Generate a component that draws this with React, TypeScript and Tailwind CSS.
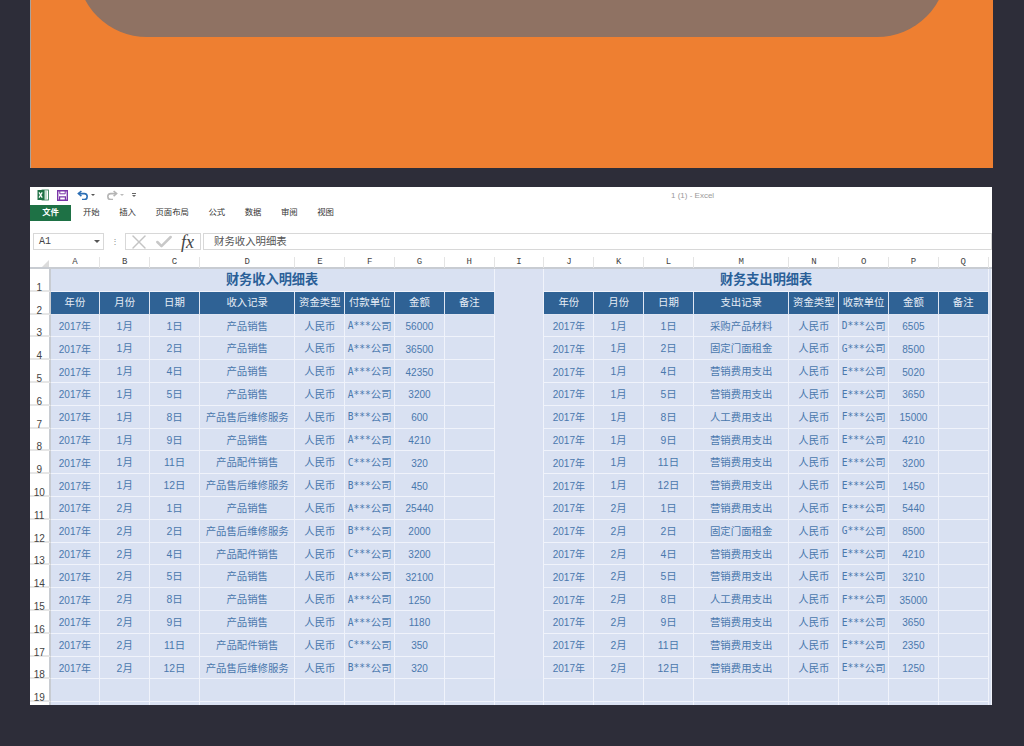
import { Fragment } from "react";
import { Check, X } from "lucide-react";

const letters = ["A", "B", "C", "D", "E", "F", "G", "H", "I", "J", "K", "L", "M", "N", "O", "P", "Q"];

const gridCols =
  "grid grid-cols-[20.5px_repeat(3,49.8px)_95.6px_repeat(8,49.8px)_95.6px_repeat(4,49.8px)_1fr] auto-rows-[22.8px] shrink-0";

const tabs = ["开始", "插入", "页面布局", "公式", "数据", "审阅", "视图"];

const months = ["1月", "2月"];
const days = ["1日", "2日", "4日", "5日", "8日", "9日", "11日", "12日"];

// [record, company, amount]
const income: [string, string, string][] = [
  ["产品销售", "A", "56000"],
  ["产品销售", "A", "36500"],
  ["产品销售", "A", "42350"],
  ["产品销售", "A", "3200"],
  ["产品售后维修服务", "B", "600"],
  ["产品销售", "A", "4210"],
  ["产品配件销售", "C", "320"],
  ["产品售后维修服务", "B", "450"],
  ["产品销售", "A", "25440"],
  ["产品售后维修服务", "B", "2000"],
  ["产品配件销售", "C", "3200"],
  ["产品销售", "A", "32100"],
  ["产品销售", "A", "1250"],
  ["产品销售", "A", "1180"],
  ["产品配件销售", "C", "350"],
  ["产品售后维修服务", "B", "320"],
];

const expense: [string, string, string][] = [
  ["采购产品材料", "D", "6505"],
  ["固定门面租金", "G", "8500"],
  ["营销费用支出", "E", "5020"],
  ["营销费用支出", "E", "3650"],
  ["人工费用支出", "F", "15000"],
  ["营销费用支出", "E", "4210"],
  ["营销费用支出", "E", "3200"],
  ["营销费用支出", "E", "1450"],
  ["营销费用支出", "E", "5440"],
  ["固定门面租金", "G", "8500"],
  ["营销费用支出", "E", "4210"],
  ["营销费用支出", "E", "3210"],
  ["人工费用支出", "F", "35000"],
  ["营销费用支出", "E", "3650"],
  ["营销费用支出", "E", "2350"],
  ["营销费用支出", "E", "1250"],
];

function RowNum({ n }: { n?: number }) {
  return (
    <div className="flex items-end justify-center bg-white border-r-2 border-r-[#c8ccd2] border-b-2 border-b-[#e6e6e6] text-[10px] leading-[5px] text-[#444]">
      {n}
    </div>
  );
}

function Cell({ children, num }: { children?: React.ReactNode; num?: boolean }) {
  return (
    <div
      className={`flex items-center justify-center whitespace-nowrap bg-[#d9e1f2] border-r border-b border-[#f0f3fb] text-[#4a78ad] pt-[2px] ${
        num ? "text-[10px]" : "text-[10.4px]"
      }`}
    >
      {children}
    </div>
  );
}

function Head({ label }: { label: string }) {
  return (
    <div className="flex items-center justify-center bg-[#2f6295] border-r border-b border-[#dfe6f3] text-[10.4px] text-[#e6edf6] pt-[1px]">
      {label}
    </div>
  );
}

function Company({ letter }: { letter: string }) {
  return (
    <Cell>
      <span className="font-['DejaVu_Sans_Mono'] text-[9.6px]">{letter}***</span>
      公司
    </Cell>
  );
}

function Gap() {
  return <div className="bg-[#dae1f2] border-r border-[#f0f3fb]" />;
}

function Title({ label }: { label: string }) {
  return (
    <div className="col-span-8 flex items-center justify-center bg-[#d9e1f2] border-r border-b border-[#f0f3fb] text-[13.2px] font-bold text-[#2a5f98]">
      {label}
    </div>
  );
}

function HeadRow({ labels }: { labels: string[] }) {
  return (
    <>
      {labels.map((l, i) => (
        <Head key={i} label={l} />
      ))}
    </>
  );
}

function Side({ rec, i }: { rec: [string, string, string]; i: number }) {
  return (
    <>
      <Cell num>2017年</Cell>
      <Cell>{months[i < 8 ? 0 : 1]}</Cell>
      <Cell>{days[i % 8]}</Cell>
      <Cell>{rec[0]}</Cell>
      <Cell>人民币</Cell>
      <Company letter={rec[1]} />
      <Cell num>{rec[2]}</Cell>
      <Cell />
    </>
  );
}

function ExcelLogo() {
  return (
    <svg viewBox="0 0 12 12" className="w-3 h-3">
      <rect x="5" y="1" width="6.5" height="10" fill="#fff" stroke="#1e7145" strokeWidth="0.8" />
      <path d="M7 3h3M7 5h3M7 7h3M7 9h3" stroke="#7fb79a" strokeWidth="0.9" />
      <rect x="0.5" y="1" width="7" height="10" fill="#1e7145" />
      <path d="M2 3.4l3.2 5.2M5.2 3.4L2 8.6" stroke="#fff" strokeWidth="1.2" />
    </svg>
  );
}

function SaveIcon() {
  return (
    <svg viewBox="0 0 11 11" className="w-[11px] h-[11px]" fill="none" stroke="#7a35a8" strokeWidth="1.4">
      <path d="M.7.7h9.6v9.6H.7z" />
      <path d="M2.8.8v3h5.4v-3" strokeWidth="1" />
      <path d="M2.6 10.2V6.8h5.8v3.4" strokeWidth="1.2" />
    </svg>
  );
}

function UndoIcon({ color, flip }: { color: string; flip?: boolean }) {
  return (
    <svg viewBox="0 0 12 10" className={`w-3 h-[10px] ${flip ? "-scale-x-100" : ""}`} fill="none" stroke={color} strokeWidth="1.6">
      <path d="M4.4 1L1.4 3.6l3 2.6" />
      <path d="M1.8 3.6h5.4a3 3 0 0 1 0 6H5" />
    </svg>
  );
}

function Caret({ color }: { color: string }) {
  return <span className={`block w-0 h-0 border-x-[2px] border-x-transparent border-t-[2px] ${color}`} />;
}

export default function App() {
  return (
    <div className="w-[1024px] h-[746px] overflow-hidden bg-[#2d2d39] font-['Liberation_Sans','Noto_Sans_CJK_SC',sans-serif]">
      <div className="ml-[30px] w-[963px] h-[168px] overflow-hidden flex justify-center bg-[#ee7f31] border-l border-[#a9a29c]">
        <div className="w-[870px] h-[120px] -mt-[83px] rounded-b-[70px] bg-[#8f7263]" />
      </div>

      <div className="mt-[19px] ml-[30px] w-[962px] h-[518px] overflow-hidden bg-white flex flex-col">
        {/* quick access bar */}
        <div className="relative shrink-0 h-[18px] flex items-center pl-[7px] pb-[2px]">
          <ExcelLogo />
          <span className="ml-2">
            <SaveIcon />
          </span>
          <span className="ml-[9px] flex items-center gap-[2px]">
            <UndoIcon color="#2c6fb5" />
            <Caret color="border-t-[#555]" />
          </span>
          <span className="ml-[11px] flex items-center gap-[2px]">
            <UndoIcon color="#b5b5b5" flip />
            <Caret color="border-t-[#bbb]" />
          </span>
          <span className="ml-[8px] flex flex-col items-center gap-[1px]">
            <span className="block w-[4px] h-[1px] bg-[#666]" />
            <Caret color="border-t-[#666]" />
          </span>
          <span className="absolute left-[641px] top-[3px] text-[8px] leading-[11px] text-[#9a9a9a]">1 (1) - Excel</span>
        </div>

        {/* ribbon tabs */}
        <div className="shrink-0 h-[16px] flex items-center text-[8.4px] text-[#333]">
          <div className="w-[41px] h-full flex items-center justify-center bg-[#1e7145] text-white font-bold mr-[12px] pb-[1px]">文件</div>
          <div className="flex gap-[19.5px] pb-[2px]">
            {tabs.map((t) => (
              <span key={t}>{t}</span>
            ))}
          </div>
        </div>

        {/* formula bar */}
        <div className="shrink-0 mt-[12px] h-[17px] flex items-stretch">
          <div className="ml-[3px] w-[71px] flex items-center justify-between pl-[5px] pr-[3px] border border-[#d8d8d8] font-['Liberation_Mono'] text-[10px] text-[#444]">
            A1
            <span className="block w-0 h-0 border-x-[3px] border-x-transparent border-t-[3px] border-t-[#555]" />
          </div>
          <div className="w-[21px] flex items-center justify-center text-[8px] text-[#888]">⋮</div>
          <div className="w-[76px] flex items-center pl-[1px] border border-[#d8d8d8]">
            <X size={24} strokeWidth={1.4} className="shrink-0 text-[#c4c4c4]" />
            <Check size={20} strokeWidth={3} className="shrink-0 ml-[3px] text-[#c8c8c8]" />
            <span className="font-['Liberation_Serif'] italic text-[18px] leading-none text-[#444] ml-[7px]">fx</span>
          </div>
          <div className="ml-[2px] flex-1 flex items-center pl-[10px] border border-[#d8d8d8] text-[10.4px] text-[#555]">财务收入明细表</div>
        </div>

        {/* column letters */}
        <div className="shrink-0 mt-[7px] h-[12px] bg-white border-b-2 border-[#c8ccd2] grid grid-cols-[20.5px_repeat(3,49.8px)_95.6px_repeat(8,49.8px)_95.6px_repeat(4,49.8px)_1fr] font-['Liberation_Mono'] text-[9px] leading-[11px] text-[#444]">
          <div className="relative">
            <span className="absolute right-[2px] bottom-[1px] w-0 h-0 border-l-[7px] border-l-transparent border-b-[7px] border-b-[#dcdcdc]" />
          </div>
          {letters.map((l) => (
            <div key={l} className="flex justify-center border-r border-[#e4e4e4]">
              {l}
            </div>
          ))}
          <div />
        </div>

        {/* sheet */}
        <div className={gridCols}>
          <RowNum n={1} />
          <Title label="财务收入明细表" />
          <Gap />
          <Title label="财务支出明细表" />
          <Gap />

          <RowNum n={2} />
          <HeadRow labels={["年份", "月份", "日期", "收入记录", "资金类型", "付款单位", "金额", "备注"]} />
          <Gap />
          <HeadRow labels={["年份", "月份", "日期", "支出记录", "资金类型", "收款单位", "金额", "备注"]} />
          <Gap />

          {income.map((rec, i) => (
            <Fragment key={i}>
              <RowNum n={i + 3} />
              <Side rec={rec} i={i} />
              <Gap />
              <Side rec={expense[i]} i={i} />
              <Gap />
            </Fragment>
          ))}

          {[19, 20].map((n) => (
            <Fragment key={n}>
              <RowNum n={n === 19 ? n : undefined} />
              {letters.map((l) => (
                <Cell key={l} />
              ))}
              <Gap />
            </Fragment>
          ))}
        </div>
      </div>
    </div>
  );
}
